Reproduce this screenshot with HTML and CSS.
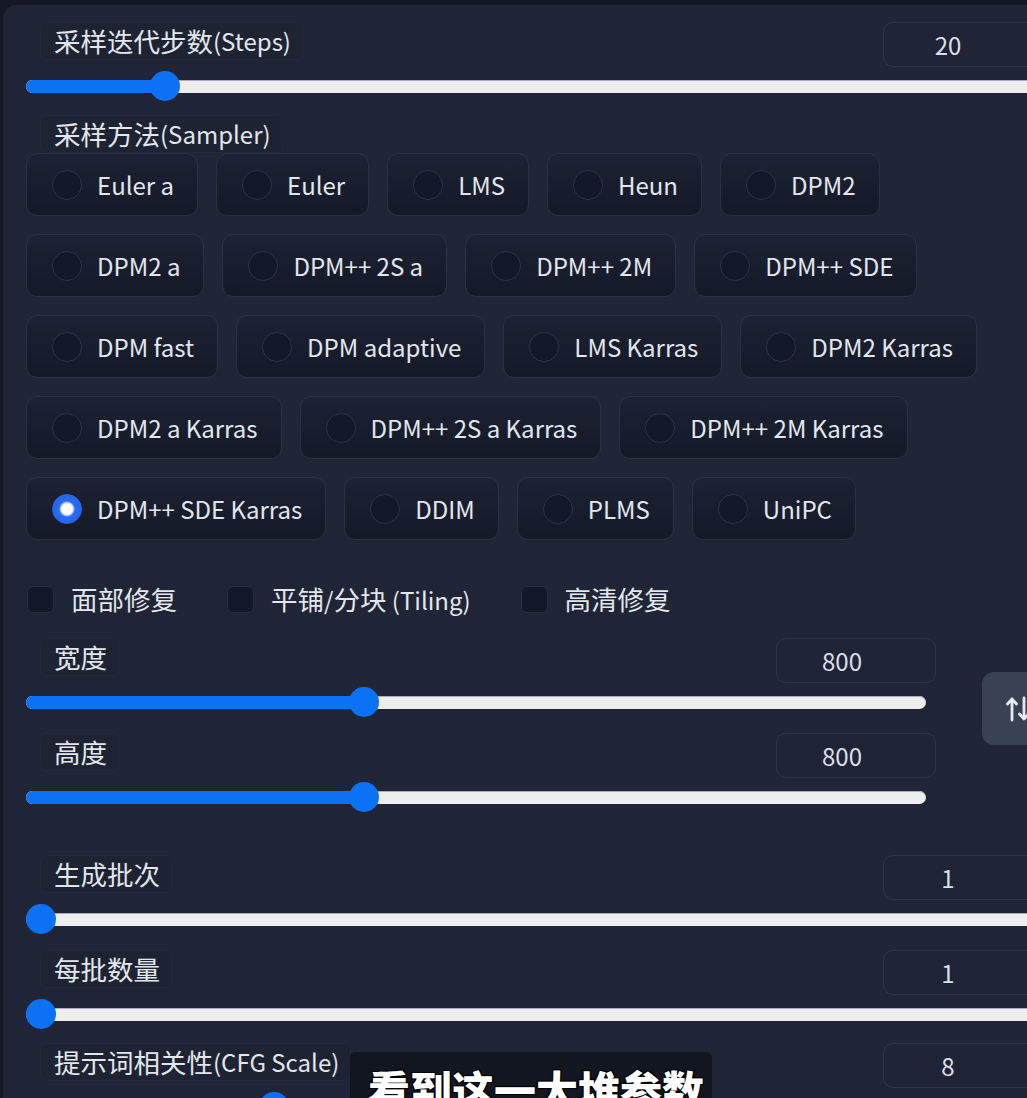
FILE: index.html
```html
<!DOCTYPE html>
<html lang="zh-CN">
<head>
<meta charset="utf-8">
<title>txt2img settings</title>
<link rel="stylesheet" href="styles.css">
</head>
<body>
<main class="panel">
  <section class="field">
    <div class="field-head">
      <span class="label"><span class="zh">采样迭代步数</span>(Steps)</span>
      <span class="num">20</span>
    </div>
    <div class="slider">
      <div class="track"><div class="fill" style="width: calc(15px + (100% - 30px) * 0.1255)"></div></div>
      <div class="thumb" style="left: calc((100% - 30px) * 0.1255)"></div>
    </div>
  </section>

  <section class="sampler">
    <span class="label"><span class="zh">采样方法</span>(Sampler)</span>
    <div class="radios">
      <label class="radio"><span class="dot"></span>Euler a</label>
      <label class="radio"><span class="dot"></span>Euler</label>
      <label class="radio"><span class="dot"></span>LMS</label>
      <label class="radio"><span class="dot"></span>Heun</label>
      <label class="radio"><span class="dot"></span>DPM2</label>
      <label class="radio"><span class="dot"></span>DPM2 a</label>
      <label class="radio"><span class="dot"></span>DPM++ 2S a</label>
      <label class="radio"><span class="dot"></span>DPM++ 2M</label>
      <label class="radio"><span class="dot"></span>DPM++ SDE</label>
      <label class="radio"><span class="dot"></span>DPM fast</label>
      <label class="radio"><span class="dot"></span>DPM adaptive</label>
      <label class="radio"><span class="dot"></span>LMS Karras</label>
      <label class="radio"><span class="dot"></span>DPM2 Karras</label>
      <label class="radio"><span class="dot"></span>DPM2 a Karras</label>
      <label class="radio"><span class="dot"></span>DPM++ 2S a Karras</label>
      <label class="radio"><span class="dot"></span>DPM++ 2M Karras</label>
      <label class="radio checked"><span class="dot"></span>DPM++ SDE Karras</label>
      <label class="radio"><span class="dot"></span>DDIM</label>
      <label class="radio"><span class="dot"></span>PLMS</label>
      <label class="radio"><span class="dot"></span>UniPC</label>
    </div>
  </section>

  <div class="checks">
    <label class="check"><span class="box"></span><span class="zh">面部修复</span></label>
    <label class="check"><span class="box"></span><span><span class="zh">平铺</span>/<span class="zh">分块</span> (Tiling)</span></label>
    <label class="check"><span class="box"></span><span class="zh">高清修复</span></label>
  </div>

  <div class="dims">
    <div class="dims-col">
      <section class="field">
        <div class="field-head">
          <span class="label"><span class="zh">宽度</span></span>
          <span class="num">800</span>
        </div>
        <div class="slider short">
          <div class="track"><div class="fill" style="width: calc(15px + (100% - 30px) * 0.371)"></div></div>
          <div class="thumb" style="left: calc((100% - 30px) * 0.371)"></div>
        </div>
      </section>
      <section class="field next">
        <div class="field-head">
          <span class="label"><span class="zh">高度</span></span>
          <span class="num">800</span>
        </div>
        <div class="slider short">
          <div class="track"><div class="fill" style="width: calc(15px + (100% - 30px) * 0.371)"></div></div>
          <div class="thumb" style="left: calc((100% - 30px) * 0.371)"></div>
        </div>
      </section>
    </div>
    <button class="swap" type="button" aria-label="swap">
      <svg width="24" height="26" viewBox="0 0 24 26" fill="none" stroke="#e8eaee" stroke-width="2.8" stroke-linecap="round" stroke-linejoin="round">
        <path d="M6 24V3M1.5 8L6 3l4.5 5"/>
        <path d="M18 2v21M13.5 18l4.5 5 4.5-5"/>
      </svg>
    </button>
  </div>

  <div class="batch">
    <section class="field">
      <div class="field-head">
        <span class="label"><span class="zh">生成批次</span></span>
        <span class="num">1</span>
      </div>
      <div class="slider">
        <div class="track"><div class="fill" style="width: 15px"></div></div>
        <div class="thumb" style="left: 0"></div>
      </div>
    </section>
    <section class="field next">
      <div class="field-head">
        <span class="label"><span class="zh">每批数量</span></span>
        <span class="num">1</span>
      </div>
      <div class="slider">
        <div class="track"><div class="fill" style="width: 15px"></div></div>
        <div class="thumb" style="left: 0"></div>
      </div>
    </section>
  </div>

  <section class="field cfg">
    <div class="field-head">
      <span class="label"><span class="zh">提示词相关性</span>(CFG Scale)</span>
      <span class="num">8</span>
    </div>
    <div class="slider">
      <div class="track"><div class="fill" style="width: calc(15px + (100% - 30px) * 0.237)"></div></div>
      <div class="thumb" style="left: calc((100% - 30px) * 0.237)"></div>
    </div>
  </section>
</main>

<div class="caption">看到这一大堆参数</div>
</body>
</html>
```

FILE: styles.css
```css
* { box-sizing: border-box; }

html, body {
  margin: 0;
  padding: 0;
  width: 1027px;
  height: 1098px;
  overflow: hidden;
  background: #131824;
}

body {
  position: relative;
  font-family: "Noto Sans CJK SC", "Noto Sans", sans-serif;
  font-size: 24px;
  color: #e3e6eb;
}

.zh { font-size: 26.5px; }

.panel {
  margin: 5px 0 0 3px;
  width: 1120px;
  min-height: 1200px;
  background: #1f2536;
  border-radius: 14px 0 0 0;
  padding: 17px 0 0 23px;
}

.panel > * { width: 1015px; }

/* label tags */
.label {
  display: inline-flex;
  align-items: center;
  height: 38px;
  padding: 0 11px 0 13px;
  margin-left: 14px;
  background: #1d2333;
  border: 1px solid #222939;
  border-radius: 6px;
  line-height: 1;
  white-space: nowrap;
}

/* field: label + number, then slider */
.field-head {
  display: flex;
  justify-content: space-between;
  align-items: flex-start;
}

.num {
  width: 158px;
  height: 45px;
  display: flex;
  align-items: center;
  justify-content: center;
  padding-right: 28px;
  border: 1px solid #2f3648;
  border-radius: 10px;
  background: #1e2435;
  color: #dcdfe5;
  line-height: 1;
}

.slider {
  position: relative;
  height: 30px;
  margin-top: 4px;
  display: flex;
  align-items: center;
}

.slider.short { width: calc(100% - 10px); }

.track {
  width: 100%;
  height: 13px;
  border-radius: 7px;
  background: #eeeeee;
  box-shadow: inset 0 1px 0 #a9acb3;
  overflow: hidden;
}

.fill {
  height: 100%;
  background: #0b72f5;
}

.thumb {
  position: absolute;
  top: 0;
  width: 30px;
  height: 30px;
  border-radius: 50%;
  background: #0b72f5;
}

.field.next { margin-top: 16px; }

/* sampler */
.sampler {
  margin-top: 14px;
  display: flex;
  flex-direction: column;
  align-items: flex-start;
}

.radios {
  display: flex;
  flex-wrap: wrap;
  gap: 18px;
  width: 100%;
}

.radio {
  display: flex;
  align-items: center;
  gap: 15px;
  height: 63px;
  padding: 0 23px 0 25px;
  border: 1px solid #2a3142;
  border-radius: 11px;
  background: linear-gradient(180deg, #1c2233 0%, #131927 100%);
  white-space: nowrap;
  line-height: 1;
}

.dot {
  width: 30px;
  height: 30px;
  border-radius: 50%;
  background: #121827;
  border: 1px solid #2d3446;
  flex: none;
}

.radio.checked .dot {
  border-color: #2667e8;
  background: radial-gradient(circle, #ffffff 0 5px, #d8e4ff 6px, #2a6cf0 8px, #2563eb 15px);
}

/* checkboxes */
.checks {
  margin-top: 46px;
  display: flex;
  align-items: center;
  gap: 49px;
  height: 27px;
}

.check {
  display: flex;
  align-items: center;
  gap: 17px;
  margin-left: 1px;
  line-height: 1;
  white-space: nowrap;
}

.box {
  width: 27px;
  height: 27px;
  border-radius: 6px;
  background: #121827;
  border: 1px solid #272e3f;
  flex: none;
}

/* width / height */
.dims {
  margin-top: 25px;
  display: flex;
  align-items: flex-start;
}

.dims-col { width: 910px; flex: none; }

.dims .num { width: 160px; }

.swap {
  margin: 34px 0 0 46px;
  width: 72px;
  height: 73px;
  flex: none;
  border: none;
  border-radius: 12px;
  background: #394253;
  display: flex;
  align-items: center;
  justify-content: center;
  padding: 0;
}

.batch { margin-top: 43px; }

.field.cfg { margin-top: 14px; }

/* video subtitle overlay */
.caption {
  position: absolute;
  left: 350px;
  top: 1052px;
  width: 362px;
  height: 70px;
  padding: 16px 0 0 18px;
  background: #121620;
  border-radius: 6px;
  font-size: 42px;
  font-weight: 900;
  line-height: 1;
  color: #ffffff;
  text-shadow: 0 0 2px #000, 1px 1px 0 #000, -1px -1px 0 #000, 1px -1px 0 #000, -1px 1px 0 #000;
  white-space: nowrap;
}
```
